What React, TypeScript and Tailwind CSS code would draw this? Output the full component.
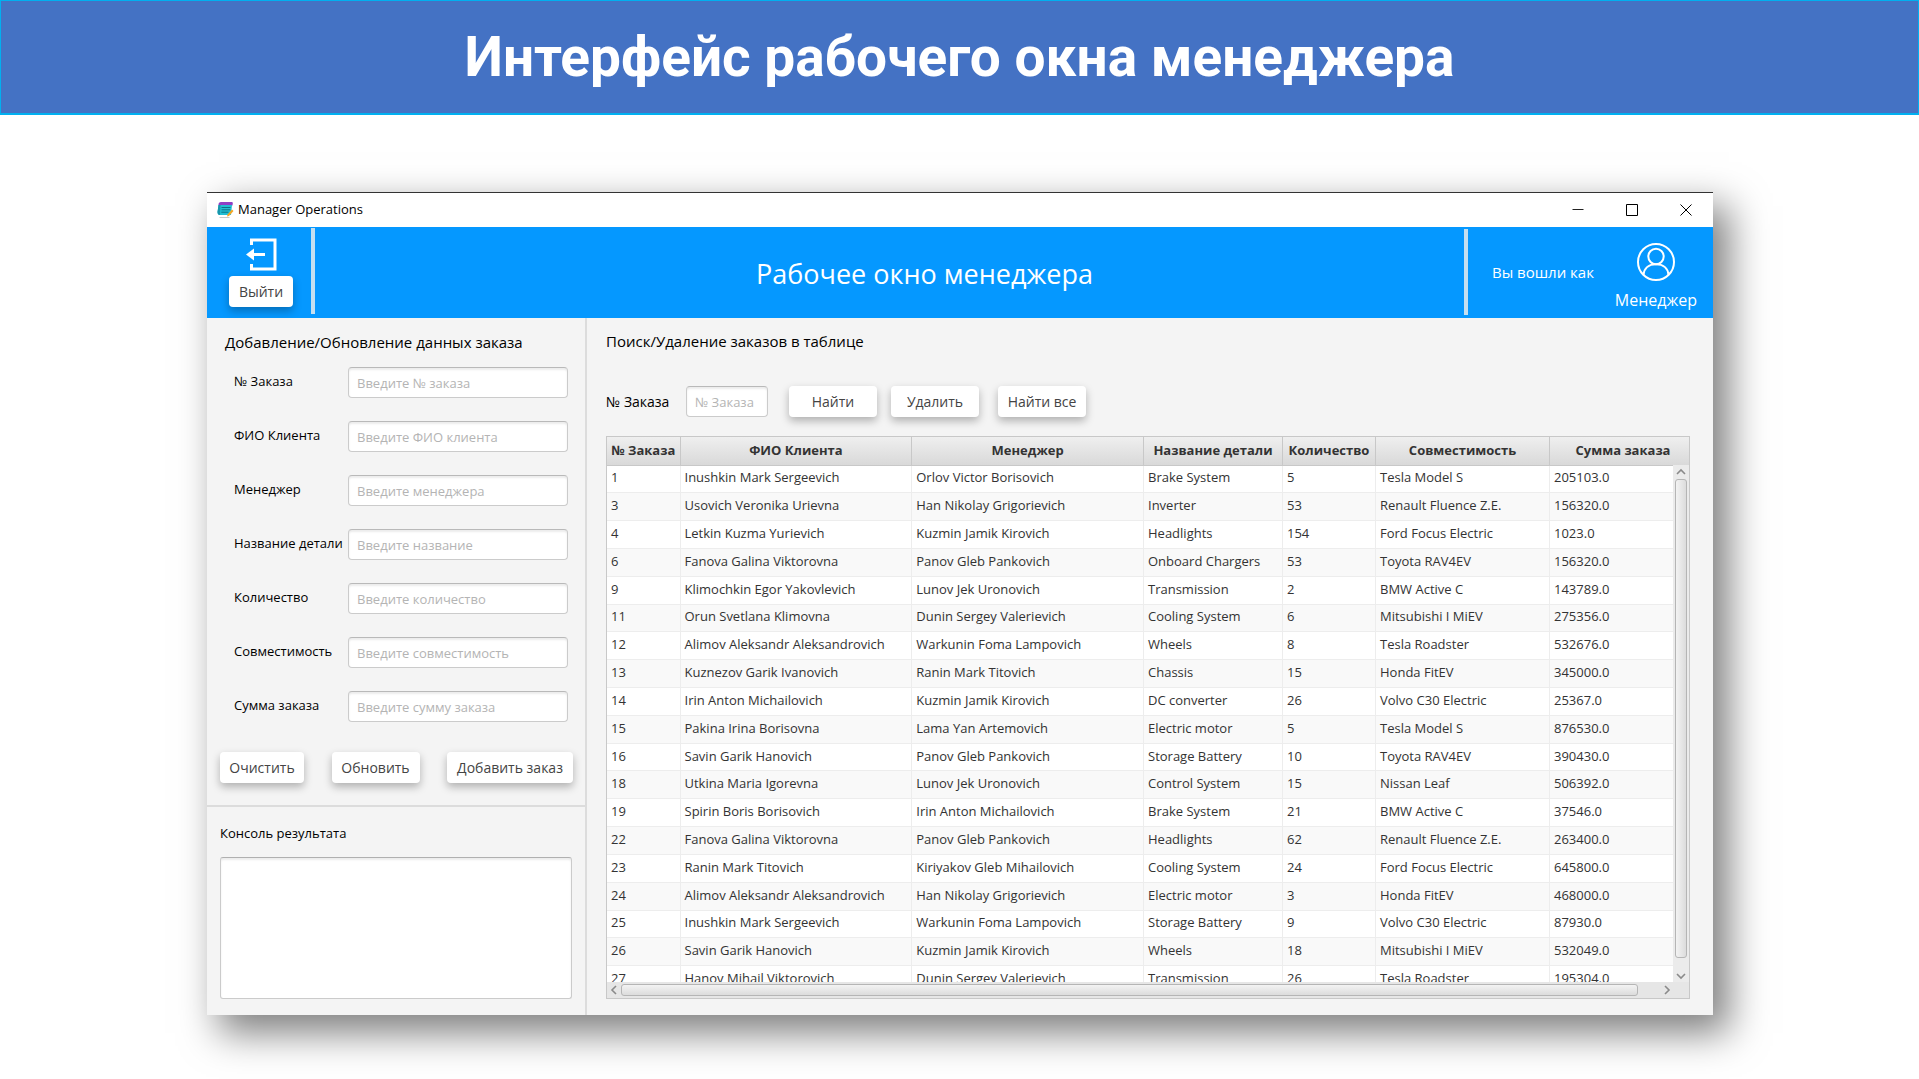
import { useId } from 'react';

const fields = [
  ['№ Заказа', 'Введите № заказа'],
  ['ФИО Клиента', 'Введите ФИО клиента'],
  ['Менеджер', 'Введите менеджера'],
  ['Название детали', 'Введите название'],
  ['Количество', 'Введите количество'],
  ['Совместимость', 'Введите совместимость'],
  ['Сумма заказа', 'Введите сумму заказа'],
];

const columns = [
  { title: '№ Заказа', width: 'w-[73px]' },
  { title: 'ФИО Клиента', width: '' },
  { title: 'Менеджер', width: '' },
  { title: 'Название детали', width: 'w-[139px]' },
  { title: 'Количество', width: 'w-[93px]' },
  { title: 'Совместимость', width: 'w-[174px]' },
  { title: 'Сумма заказа', width: 'w-[147px]' },
];

const rows = [
  ['1', 'Inushkin Mark Sergeevich', 'Orlov Victor Borisovich', 'Brake System', '5', 'Tesla Model S', '205103.0'],
  ['3', 'Usovich Veronika Urievna', 'Han Nikolay Grigorievich', 'Inverter', '53', 'Renault Fluence Z.E.', '156320.0'],
  ['4', 'Letkin Kuzma Yurievich', 'Kuzmin Jamik Kirovich', 'Headlights', '154', 'Ford Focus Electric', '1023.0'],
  ['6', 'Fanova Galina Viktorovna', 'Panov Gleb Pankovich', 'Onboard Chargers', '53', 'Toyota RAV4EV', '156320.0'],
  ['9', 'Klimochkin Egor Yakovlevich', 'Lunov Jek Uronovich', 'Transmission', '2', 'BMW Active C', '143789.0'],
  ['11', 'Orun Svetlana Klimovna', 'Dunin Sergey Valerievich', 'Cooling System', '6', 'Mitsubishi I MiEV', '275356.0'],
  ['12', 'Alimov Aleksandr Aleksandrovich', 'Warkunin Foma Lampovich', 'Wheels', '8', 'Tesla Roadster', '532676.0'],
  ['13', 'Kuznezov Garik Ivanovich', 'Ranin Mark Titovich', 'Chassis', '15', 'Honda FitEV', '345000.0'],
  ['14', 'Irin Anton Michailovich', 'Kuzmin Jamik Kirovich', 'DC converter', '26', 'Volvo C30 Electric', '25367.0'],
  ['15', 'Pakina Irina Borisovna', 'Lama Yan Artemovich', 'Electric motor', '5', 'Tesla Model S', '876530.0'],
  ['16', 'Savin Garik Hanovich', 'Panov Gleb Pankovich', 'Storage Battery', '10', 'Toyota RAV4EV', '390430.0'],
  ['18', 'Utkina Maria Igorevna', 'Lunov Jek Uronovich', 'Control System', '15', 'Nissan Leaf', '506392.0'],
  ['19', 'Spirin Boris Borisovich', 'Irin Anton Michailovich', 'Brake System', '21', 'BMW Active C', '37546.0'],
  ['22', 'Fanova Galina Viktorovna', 'Panov Gleb Pankovich', 'Headlights', '62', 'Renault Fluence Z.E.', '263400.0'],
  ['23', 'Ranin Mark Titovich', 'Kiriyakov Gleb Mihailovich', 'Cooling System', '24', 'Ford Focus Electric', '645800.0'],
  ['24', 'Alimov Aleksandr Aleksandrovich', 'Han Nikolay Grigorievich', 'Electric motor', '3', 'Honda FitEV', '468000.0'],
  ['25', 'Inushkin Mark Sergeevich', 'Warkunin Foma Lampovich', 'Storage Battery', '9', 'Volvo C30 Electric', '87930.0'],
  ['26', 'Savin Garik Hanovich', 'Kuzmin Jamik Kirovich', 'Wheels', '18', 'Mitsubishi I MiEV', '532049.0'],
  ['27', 'Hanov Mihail Viktorovich', 'Dunin Sergey Valerievich', 'Transmission', '26', 'Tesla Roadster', '195304.0'],
];

const inputStyle =
  'h-[31px] rounded-[4px] border border-[#cbcbcb] border-t-[#b9b9b9] bg-white px-2 text-[13px] text-[#333] shadow-[inset_0_2px_2px_#ececec] outline-none placeholder:text-[#b4b4b4]';

function Button({ children, className = '' }: { children: string; className?: string }) {
  return (
    <button
      type="button"
      className={`h-[31px] rounded-[4px] bg-white text-[14px] whitespace-nowrap text-[#444] shadow-[0_4px_9px_rgba(0,0,0,0.28)] ${className}`}
    >
      {children}
    </button>
  );
}

function Field({ label, placeholder }: { label: string; placeholder: string }) {
  const id = useId();
  return (
    <div className="flex items-center">
      <label htmlFor={id} className="w-[114px] shrink-0 pb-[2px] whitespace-nowrap text-[13px]">
        {label}
      </label>
      <input id={id} placeholder={placeholder} className={`w-0 grow ${inputStyle}`} />
    </div>
  );
}

function Chevron({ d }: { d: string }) {
  return (
    <svg viewBox="0 0 10 10" className="size-[10px]" fill="none" stroke="#8a8a8a" strokeWidth="1.6">
      <path d={d} />
    </svg>
  );
}

function AppIcon() {
  return (
    <svg viewBox="0 0 16 17" className="size-[17px]">
      <path d="M1 2.5 Q1 0 3.5 0 H14.5 Q15.5 0 15.3 1.5 L15 3.5 H1Z" fill="#8f3fc4" />
      <path d="M1 3 H14.5 L13.5 13 H2 Q0 13 0 10Z" fill="#22bfd4" />
      <path d="M1 3 L3 3 L2.5 13 Q0 13 0 10Z" fill="#1795ab" />
      <path d="M4 5.5 H13 M4 7.8 H12.8 M3.8 10.2 H11" stroke="#0b7285" strokeWidth="1" />
      <path d="M14.5 7.5 L16 9 L11.5 14 L9.5 14.5 L10 12.5Z" fill="#f5a623" />
      <path d="M2 15.5 H12" stroke="#c9c9c9" strokeWidth="1" />
    </svg>
  );
}

function ExitIcon() {
  return (
    <svg viewBox="0 0 31 33" className="h-[33px] w-[31px] shrink-0" fill="none" stroke="#fff">
      <path d="M5.5 7 V2 H29 V31 H5.5 V26" strokeWidth="3" />
      <path d="M7 16.5 H19" strokeWidth="3" />
      <path d="M0 16.5 L8 10.5 V22.5Z" fill="#fff" stroke="none" />
    </svg>
  );
}

function UserIcon() {
  return (
    <svg viewBox="0 0 38 38" className="size-[38px]" fill="none" stroke="#fff" strokeWidth="2">
      <circle cx="19" cy="19" r="18" />
      <circle cx="19" cy="13.5" r="7.7" />
      <path d="M6.5 32 C7 25 12 21.3 19 21.3 C26 21.3 31 25 31.5 32" />
    </svg>
  );
}

export default function App() {
  const searchId = useId();
  const consoleId = useId();
  return (
    <div className="min-h-screen bg-white font-['Open_Sans',sans-serif] text-black">
      <header className="flex h-[115px] items-center justify-center border-t border-r border-b-2 border-l border-[#00b0f0] bg-[#4472c4]">
        <h1 className="font-[Roboto,sans-serif] text-[55px] leading-none font-bold whitespace-nowrap text-white">
          Интерфейс рабочего окна менеджера
        </h1>
      </header>

      <main className="pt-[77px] pr-[206px] pb-16 pl-[207px]">
        <section className="border-t border-[#333] bg-[#f4f4f4] shadow-[14px_16px_36px_2px_rgba(0,0,0,0.5)]">
          <div className="flex h-[34px] items-center bg-white pl-[10px]">
            <AppIcon />
            <span className="ml-1 text-[13px]">Manager Operations</span>
            <div className="ml-auto flex">
              <button type="button" aria-label="Свернуть" className="flex h-[34px] w-[54px] items-center justify-center">
                <svg viewBox="0 0 12 12" className="size-3" stroke="#222"><path d="M0.5 5.5H11.5" /></svg>
              </button>
              <button type="button" aria-label="Развернуть" className="flex h-[34px] w-[54px] items-center justify-center">
                <svg viewBox="0 0 12 12" className="size-3" fill="none" stroke="#000"><path d="M0.5 0.5H11.5V11.5H0.5Z" /></svg>
              </button>
              <button type="button" aria-label="Закрыть" className="flex h-[34px] w-[54px] items-center justify-center">
                <svg viewBox="0 0 12 12" className="size-3" stroke="#000"><path d="M0.5 0.5L11.5 11.5M11.5 0.5L0.5 11.5" /></svg>
              </button>
            </div>
          </div>

          <div className="flex h-[91px] bg-[#0598ff] text-white">
            <div className="mt-[1px] mb-1 flex w-[108px] shrink-0 flex-col items-center border-r-4 border-[#c5dff0] pt-[10px] pl-1">
              <ExitIcon />
              <Button className="mt-[5px] w-[64px] shrink-0">Выйти</Button>
            </div>
            <div className="flex grow items-center justify-center pt-[3px] pl-[70px]">
              <h2 className="text-[27px] whitespace-nowrap">Рабочее окно менеджера</h2>
            </div>
            <div className="mt-[2px] mb-[3px] flex w-[249px] shrink-0 items-center justify-between border-l-4 border-[#c5dff0] pr-4 pl-6">
              <span className="text-[15px]">Вы вошли как</span>
              <div className="flex flex-col items-center pt-2">
                <UserIcon />
                <span className="mt-[9px] text-[16px] leading-5">Менеджер</span>
              </div>
            </div>
          </div>

          <div className="flex">
            <aside className="flex w-[380px] shrink-0 flex-col border-r-2 border-[#dcdcdc]">
              <form className="border-b-2 border-[#dcdcdc] pt-3 pb-[22px]">
                <h3 className="pl-[18px] text-[15px] leading-6">Добавление/Обновление данных заказа</h3>
                <div className="mt-[13px] flex flex-col gap-[23px] pr-[17px] pl-[27px]">
                  {fields.map(([label, placeholder]) => (
                    <Field key={label} label={label} placeholder={placeholder} />
                  ))}
                </div>
                <div className="mt-[30px] flex justify-between pr-3 pl-[13px]">
                  <Button className="w-[84px]">Очистить</Button>
                  <Button className="w-[88px]">Обновить</Button>
                  <Button className="w-[126px]">Добавить заказ</Button>
                </div>
              </form>
              <div className="flex grow flex-col px-[13px] pt-[14px] pb-4">
                <label htmlFor={consoleId} className="text-[13px] leading-6">Консоль результата</label>
                <textarea
                  id={consoleId}
                  className="mt-[12px] min-h-[142px] grow resize-none rounded-[3px] border border-[#cbcbcb] border-t-[#b0b0b0] bg-white shadow-[inset_0_2px_2px_#ececec] outline-none"
                />
              </div>
            </aside>

            <section className="min-w-0 grow pt-[11px] pr-[23px] pb-4 pl-[19px]">
              <h3 className="text-[15px] leading-6">Поиск/Удаление заказов в таблице</h3>
              <div className="mt-[33px] flex items-center">
                <label htmlFor={searchId} className="w-[80px] shrink-0 whitespace-nowrap text-[14px]">№ Заказа</label>
                <input id={searchId} placeholder="№ Заказа" className={`w-[82px] ${inputStyle}`} />
                <Button className="ml-[21px] w-[88px]">Найти</Button>
                <Button className="ml-[14px] w-[88px]">Удалить</Button>
                <Button className="ml-[19px] w-[88px]">Найти все</Button>
              </div>

              <div className="relative mt-[19px] h-[563px] overflow-hidden border border-[#c8c8c8] bg-white">
                <table className="h-[557px] w-[calc(100%+8px)] table-fixed border-collapse text-[13px] text-[#333]">
                  <thead>
                    <tr className="h-[28px] bg-linear-to-b from-[#efefef] to-[#d9d9d9]">
                      {columns.map((c) => (
                        <th key={c.title} className={`border-r border-b border-[#c8c8c8] px-0 pt-0 pb-[2px] text-center leading-5 font-bold whitespace-nowrap ${c.width}`}>
                          {c.title}
                        </th>
                      ))}
                    </tr>
                  </thead>
                  <tbody>
                    {rows.map((row) => (
                      <tr key={row[0]} className="even:bg-[#f9f9f9]">
                        {row.map((cell, i) => (
                          <td key={i} className="border-r border-b border-[#ededed] pt-0 pr-0 pb-[3px] pl-1 leading-5 whitespace-nowrap">
                            {cell}
                          </td>
                        ))}
                      </tr>
                    ))}
                  </tbody>
                </table>
                <div className="absolute top-[28px] right-0 bottom-[16px] flex w-[16px] flex-col items-center bg-[#ebebeb]">
                  <button type="button" aria-label="Вверх" className="flex h-[14px] items-center"><Chevron d="M1 7L5 3L9 7" /></button>
                  <div className="w-[12px] grow rounded-[3px] border border-[#b5b5b5] bg-linear-to-r from-[#f3f3f3] to-[#dcdcdc]" />
                  <button type="button" aria-label="Вниз" className="flex h-[24px] items-end pb-[1px]"><Chevron d="M1 3L5 7L9 3" /></button>
                </div>
                <div className="absolute right-0 bottom-0 left-0 flex h-[16px] items-center bg-[#e6e6e6] pr-[16px]">
                  <button type="button" aria-label="Влево" className="flex w-[14px] justify-center"><Chevron d="M7 1L3 5L7 9" /></button>
                  <div className="h-[12px] grow rounded-[3px] border border-[#b5b5b5] bg-linear-to-b from-[#f3f3f3] to-[#dcdcdc]" />
                  <button type="button" aria-label="Вправо" className="flex w-[35px] justify-end pr-[1px]"><Chevron d="M3 1L7 5L3 9" /></button>
                </div>
              </div>
            </section>
          </div>
        </section>
      </main>
    </div>
  );
}
